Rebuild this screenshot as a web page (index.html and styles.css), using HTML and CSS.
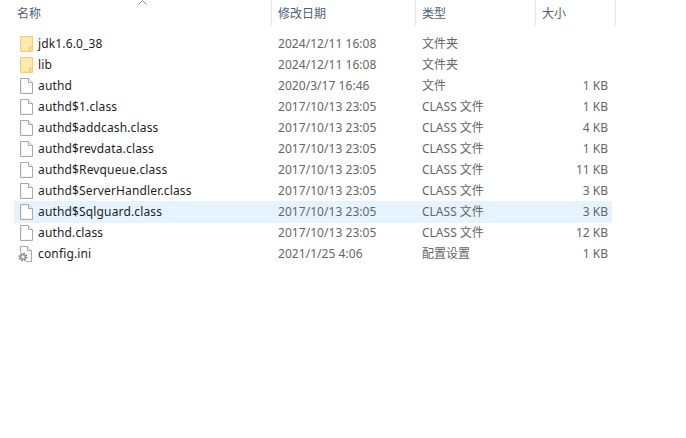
FILE: index.html
```html
<!DOCTYPE html>
<html lang="zh-CN">
<head>
<meta charset="utf-8">
<title>文件列表</title>
<link rel="stylesheet" href="styles.css">
</head>
<body>
<svg class="defs" width="0" height="0" aria-hidden="true">
  <symbol id="folder" viewBox="0 0 13 16">
    <path d="M.5.5h12v15H.5z" fill="#fde08c" stroke="#efd078"/>
    <path d="M1.500 1.500h10v10H9.500v2.500H1.500z" fill="#fee9ae"/>
    <path d="M9.500 15v-4h3" fill="none" stroke="#e9ca72"/>
  </symbol>
  <symbol id="file" viewBox="0 0 13 16">
    <path d="M.5.500H8.500L12.500 4.500V15.500H.5z" fill="#fff" stroke="#a9a9a9"/>
    <path d="M8.500.5V4.500H12.500" fill="#f3f3f3" stroke="#a9a9a9"/>
    <path d="M1.500 1.500V14.500H11.500" fill="none" stroke="#f2f2f2"/>
  </symbol>
  <symbol id="config" viewBox="0 0 15 16">
    <path d="M2.500 6V.5H9.500L13.500 4.500V15.500H8" fill="#fff" stroke="#a9a9a9"/>
    <path d="M9.500.5V4.500H13.500" fill="#f3f3f3" stroke="#a9a9a9"/>
    <circle cx="5" cy="11" r="3.600" fill="#d9d9d9" stroke="#7f7f7f" stroke-width="1.800" stroke-dasharray="1.500 1.300"/>
    <circle cx="5" cy="11" r="2.400" fill="#cfcfcf" stroke="#8a8a8a"/>
    <circle cx="5" cy="11" r=".9" fill="#fff"/>
  </symbol>
</svg>

<div class="sort-caret"><svg width="9" height="5" viewBox="0 0 9 5"><path d="M.5 4.500L4.500.5L8.500 4.500" fill="none" stroke="#7d8a96"/></svg></div>

<div class="header">
  <div class="hcell hname">名称</div>
  <div class="hcell hdate">修改日期</div>
  <div class="hcell htype">类型</div>
  <div class="hcell hsize">大小</div>
</div>

<div class="list">
  <div class="row"><svg class="icon folder"><use href="#folder"/></svg><span class="name">jdk1.6.0_38</span><span class="date">2024/12/11 16:08</span><span class="type">文件夹</span><span class="size"></span></div>
  <div class="row"><svg class="icon folder"><use href="#folder"/></svg><span class="name">lib</span><span class="date">2024/12/11 16:08</span><span class="type">文件夹</span><span class="size"></span></div>
  <div class="row"><svg class="icon file"><use href="#file"/></svg><span class="name">authd</span><span class="date">2020/3/17 16:46</span><span class="type">文件</span><span class="size">1 KB</span></div>
  <div class="row"><svg class="icon file"><use href="#file"/></svg><span class="name">authd$1.class</span><span class="date">2017/10/13 23:05</span><span class="type">CLASS 文件</span><span class="size">1 KB</span></div>
  <div class="row"><svg class="icon file"><use href="#file"/></svg><span class="name">authd$addcash.class</span><span class="date">2017/10/13 23:05</span><span class="type">CLASS 文件</span><span class="size">4 KB</span></div>
  <div class="row"><svg class="icon file"><use href="#file"/></svg><span class="name">authd$revdata.class</span><span class="date">2017/10/13 23:05</span><span class="type">CLASS 文件</span><span class="size">1 KB</span></div>
  <div class="row"><svg class="icon file"><use href="#file"/></svg><span class="name">authd$Revqueue.class</span><span class="date">2017/10/13 23:05</span><span class="type">CLASS 文件</span><span class="size">11 KB</span></div>
  <div class="row"><svg class="icon file"><use href="#file"/></svg><span class="name">authd$ServerHandler.class</span><span class="date">2017/10/13 23:05</span><span class="type">CLASS 文件</span><span class="size">3 KB</span></div>
  <div class="row selected"><svg class="icon file"><use href="#file"/></svg><span class="name">authd$Sqlguard.class</span><span class="date">2017/10/13 23:05</span><span class="type">CLASS 文件</span><span class="size">3 KB</span></div>
  <div class="row"><svg class="icon file"><use href="#file"/></svg><span class="name">authd.class</span><span class="date">2017/10/13 23:05</span><span class="type">CLASS 文件</span><span class="size">12 KB</span></div>
  <div class="row"><svg class="icon config"><use href="#config"/></svg><span class="name">config.ini</span><span class="date">2021/1/25 4:06</span><span class="type">配置设置</span><span class="size">1 KB</span></div>
</div>
</body>
</html>
```
FILE: styles.css
```css
html, body {
  margin: 0;
  padding: 0;
  background: #fff;
}
body {
  position: relative;
  width: 686px;
  height: 438px;
  overflow: hidden;
  font-family: "Noto Sans", "Noto Sans CJK SC", sans-serif;
  font-size: 12px;
}
.defs {
  position: absolute;
}
.sort-caret {
  position: absolute;
  left: 138px;
  top: 0;
  line-height: 0;
}
.header {
  display: flex;
  height: 26px;
  margin-left: 11px;
  color: #4c607a;
}
.hcell {
  box-sizing: border-box;
  height: 26px;
  line-height: 26px;
  padding-left: 6px;
  border-right: 1px solid #e5e5e5;
  font-family: "Noto Sans CJK SC", sans-serif;
}
.hname { width: 261px; }
.hdate { width: 144px; }
.htype { width: 120px; }
.hsize { width: 80px; }
.list {
  display: flex;
  flex-direction: column;
  margin: 7px 0 0 14px;
  width: 598px;
}
.row {
  display: flex;
  align-items: center;
  height: 21px;
  color: #666;
}
.row.selected {
  background: #e5f3ff;
  box-shadow: 0 1px 0 #e5f3ff;
}
.icon {
  flex: none;
  height: 16px;
}
.folder { width: 13px; margin: 0 5px 0 6px; }
.file { width: 13px; margin: 0 5px 0 6px; }
.config { width: 15px; margin: 0 5px 0 4px; }
.name {
  width: 240px;
  color: #1e1e1e;
  white-space: nowrap;
  letter-spacing: 0.15px;
}
.date {
  width: 144px;
  letter-spacing: 0.05px;
}
.type {
  width: 120px;
  padding-bottom: 2px;
}
.size {
  width: 66px;
  text-align: right;
}
```
